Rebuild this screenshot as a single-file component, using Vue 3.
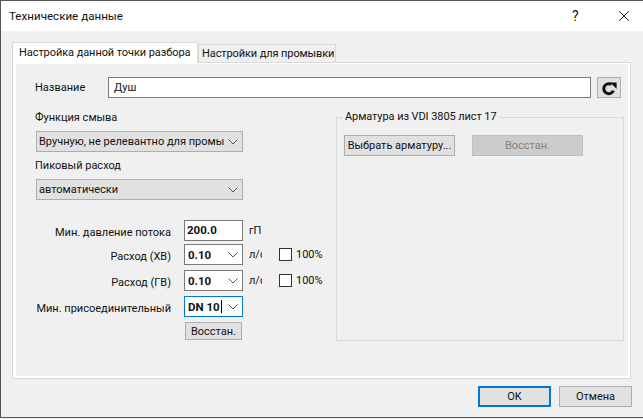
<script setup>
const rows = [
  { label: 'Расход (ХВ)', value: '0.10' },
  { label: 'Расход (ГВ)', value: '0.10' },
]
</script>

<template>
  <div class="window">
    <header class="titlebar">
      <span class="title">Технические данные</span>
      <span class="help">?</span>
      <svg class="close" width="12" height="12" viewBox="0 0 12 12"><path d="M1 1 L11 11 M11 1 L1 11" stroke="#222" stroke-width="1" fill="none" /></svg>
    </header>
    <main class="body">
      <div class="tabs">
        <div class="tab active">Настройка данной точки разбора</div>
        <div class="tab">Настройки для промывки</div>
      </div>
      <section class="pane">
        <div class="inner">
          <div class="name-row">
            <span class="name-label">Название</span>
            <div class="field name-field">Душ</div>
            <button class="btn refresh">
              <svg width="16" height="16" viewBox="0 0 16 16"><path d="M12.4 10.6 A5 5 0 1 1 10.4 4.4" stroke="#111" stroke-width="3" fill="none" /><path d="M8.8 2.4 L15.6 2.4 L15.6 8.8 Z" fill="#111" /></svg>
            </button>
          </div>
          <div class="columns">
            <div class="left">
              <div class="cap first">Функция смыва</div>
              <div class="combo grey">
                <span class="combo-text">Вручную, не релевантно для промы</span>
                <svg class="chev" width="10" height="6" viewBox="0 0 10 6"><path d="M0.5 0.5 L5 5 L9.5 0.5" stroke="#555" fill="none" /></svg>
              </div>
              <div class="cap second">Пиковый расход</div>
              <div class="combo grey">
                <span class="combo-text">автоматически</span>
                <svg class="chev" width="10" height="6" viewBox="0 0 10 6"><path d="M0.5 0.5 L5 5 L9.5 0.5" stroke="#555" fill="none" /></svg>
              </div>
              <div class="form">
                <div class="row first-row">
                  <span class="row-label">Мин. давление потока</span>
                  <div class="field small bold">200.0</div>
                  <span class="unit">гП</span>
                </div>
                <div v-for="r in rows" :key="r.label" class="row">
                  <span class="row-label">{{ r.label }}</span>
                  <div class="combo small white">
                    <span class="combo-text bold">{{ r.value }}</span>
                    <svg class="chev" width="10" height="6" viewBox="0 0 10 6"><path d="M0.5 0.5 L5 5 L9.5 0.5" stroke="#555" fill="none" /></svg>
                  </div>
                  <span class="unit">л/с</span>
                  <span class="check"></span>
                  <span class="pct">100%</span>
                </div>
                <div class="row">
                  <span class="row-label">Мин. присоединительный</span>
                  <div class="combo small white focus">
                    <span class="combo-text bold">DN 10<i class="caret"></i></span>
                    <svg class="chev" width="10" height="6" viewBox="0 0 10 6"><path d="M0.5 0.5 L5 5 L9.5 0.5" stroke="#555" fill="none" /></svg>
                  </div>
                </div>
                <button class="btn restore">Восстан.</button>
              </div>
            </div>
            <fieldset class="group">
              <legend>Арматура из VDI 3805 лист 17</legend>
              <div class="group-btns">
                <button class="btn wide">Выбрать арматуру...</button>
                <button class="btn wide disabled">Восстан.</button>
              </div>
            </fieldset>
          </div>
        </div>
      </section>
      <footer class="footer">
        <button class="btn action ok">OK</button>
        <button class="btn action">Отмена</button>
      </footer>
    </main>
  </div>
</template>

<style scoped>
.window {
  width: 643px;
  height: 418px;
  box-sizing: border-box;
  border-top: 1px solid #555;
  border-left: 1px solid #555;
  border-bottom: 1px solid #555;
  background: #f0f0f0;
  font-family: Roboto, "Open Sans", sans-serif;
  font-size: 11px;
  color: #111;
  display: flex;
  flex-direction: column;
  white-space: nowrap;
}
.titlebar {
  height: 30px;
  background: #fff;
  display: flex;
  align-items: center;
  padding-left: 8px;
  flex: none;
  font-size: 11.6px;
}
.title { flex: 1; }
.help { width: 14px; margin-right: 32px; font-size: 14px; }
.close { margin-right: 13px; }
.body { flex: 1; padding: 11px 11px 0 11px; display: flex; flex-direction: column; }
.tabs { display: flex; height: 20px; align-items: flex-end; position: relative; z-index: 1; }
.tab {
  height: 18px;
  width: 138px;
  box-sizing: border-box;
  background: #f0f0f0;
  border: 1px solid #d9d9d9;
  border-bottom: none;
  padding-left: 3px;
  line-height: 18px;
  letter-spacing: -0.1px;
}
.tab.active {
  width: 186px;
  height: 21px;
  background: #fff;
  position: relative;
  top: 1px;
  padding-left: 6px;
  line-height: 20px;
  letter-spacing: -0.07px;
}
.pane {
  width: 619px;
  height: 317px;
  box-sizing: border-box;
  border: 1px solid #d9d9d9;
  background: #fff;
  padding: 1px 2px 2px 3px;
}
.inner { background: #f0f0f0; height: 100%; padding: 13px 7px 0 19px; box-sizing: border-box; }
.name-row { display: flex; align-items: center; height: 21px; }
.name-label { width: 73px; flex: none; }
.field {
  background: #fff;
  border: 1px solid #7a7a7a;
  box-sizing: border-box;
  height: 21px;
  line-height: 19px;
  padding-left: 5px;
}
.name-field { width: 483px; flex: none; }
.btn {
  font: inherit;
  color: inherit;
  background: #e1e1e1;
  border: 1px solid #adadad;
  box-sizing: border-box;
  padding: 0;
  display: flex;
  align-items: center;
  justify-content: center;
}
.refresh { width: 24px; height: 21px; margin-left: 6px; flex: none; }
.columns { display: flex; }
.left { width: 207px; margin-left: 1px; flex: none; }
.cap { height: 14px; line-height: 16px; margin-left: -1px; }
.cap.first { margin-top: 12px; margin-bottom: 7px; }
.cap.second { margin-top: 6px; margin-bottom: 7px; }
.combo {
  display: flex;
  align-items: center;
  height: 21px;
  box-sizing: border-box;
  border: 1px solid #adadad;
  padding-left: 2px;
  position: relative;
}
.combo-text { flex: 1; white-space: nowrap; overflow: hidden; }
.chev { flex: none; margin-right: 4px; margin-left: 2px; }
.grey { background: #e1e1e1; width: 207px; }
.white { background: #fff; border-color: #7a7a7a; }
.small { width: 59px; font-size: 11.5px; padding-left: 3px; }
.small.field { padding-left: 2px; }
.bold { font-weight: 700; }
.focus { border-color: #0078d7; }
.caret { display: inline-block; width: 1px; height: 13px; background: #000; vertical-align: -2px; margin-left: 1px; }
.form { margin-top: 20px; }
.row { display: flex; align-items: center; height: 21px; margin-bottom: 5px; width: 300px; margin-left: -1px; }
.first-row { margin-bottom: 3px; }
.row-label { width: 136px; text-align: right; margin-right: 13px; flex: none; padding-top: 3px; }
.unit { width: 13px; overflow: hidden; white-space: nowrap; margin-left: 6px; flex: none; }
.check { width: 13px; height: 13px; border: 1px solid #333; background: #fff; box-sizing: border-box; margin-left: 17px; flex: none; }
.pct { margin-left: 4px; }
.restore { width: 57px; height: 18px; margin-left: 149px; margin-top: 1px; }
.group {
  margin: 12px 0 0 93px;
  width: 288px;
  height: 231px;
  flex: none;
  box-sizing: border-box;
  border: 1px solid #d9d9d9;
  padding: 11px 0 0 7px;
}
legend { padding: 0 2px; margin-left: -1px; line-height: 14px; letter-spacing: -0.08px; }
.group-btns { display: flex; gap: 17px; }
.wide { width: 111px; height: 21px; }
.disabled { background: #ccc; border-color: #bfbfbf; color: #838383; }
.footer { display: flex; justify-content: flex-end; gap: 8px; margin-top: 7px; }
.action { width: 73px; height: 21px; }
.ok { border: 2px solid #0078d7; }
</style>

<style>
html, body { margin: 0; background: #f0f0f0; }
</style>
